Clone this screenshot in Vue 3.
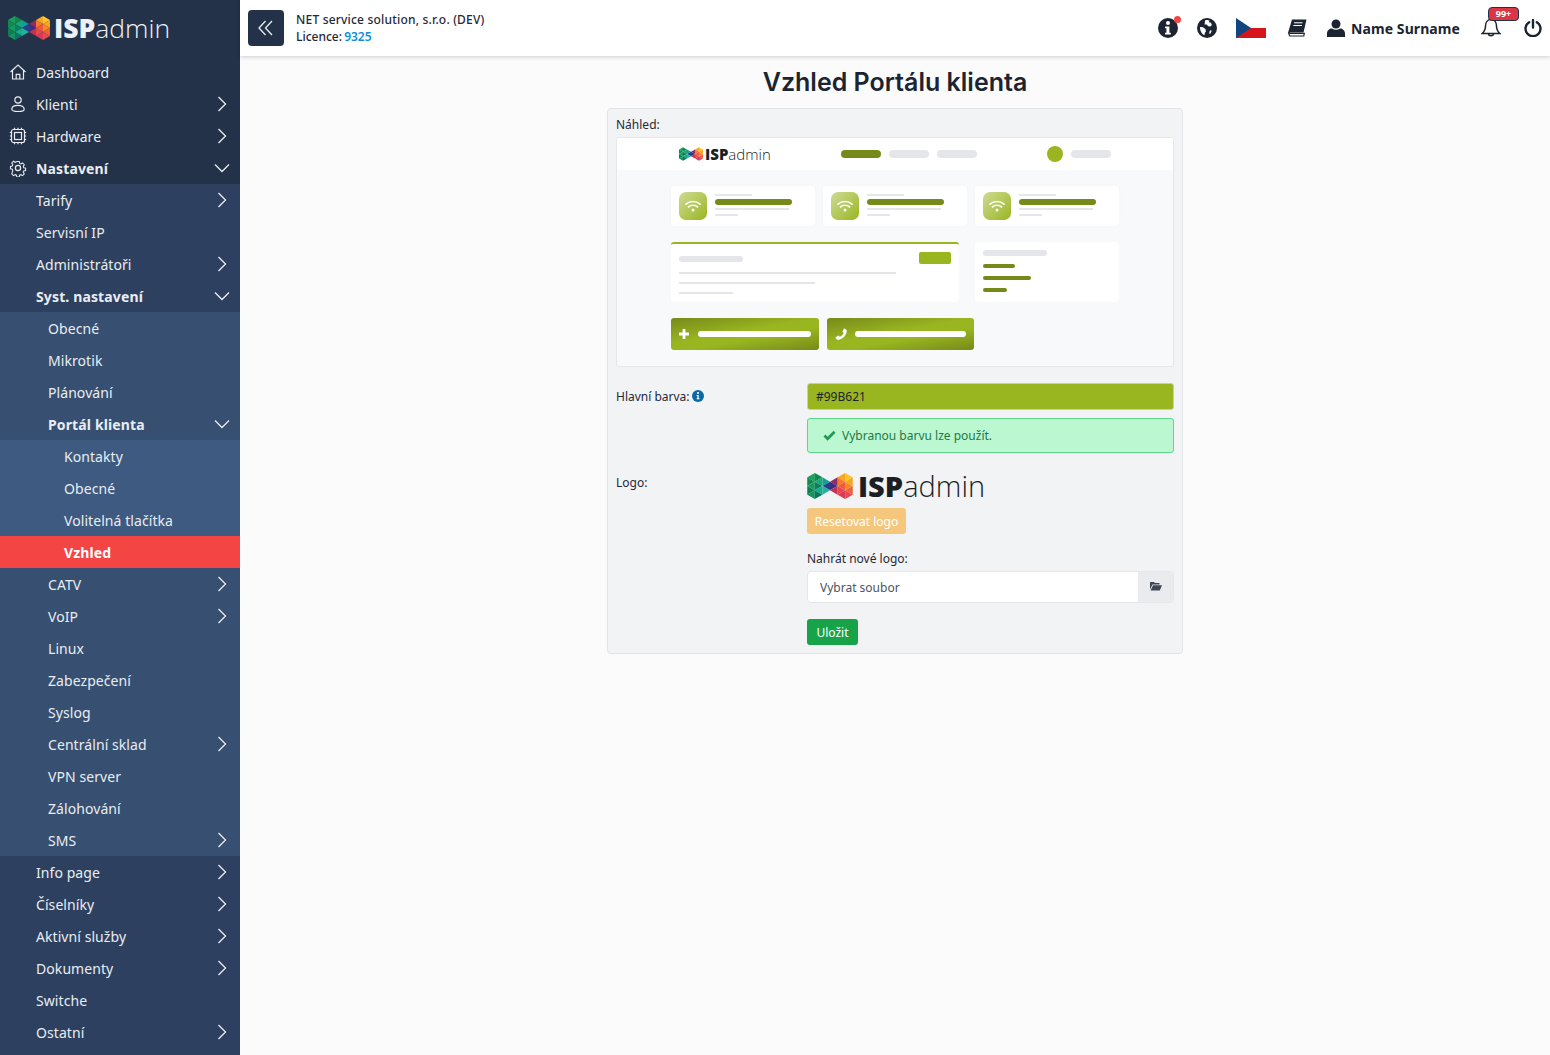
<template>
  <div class="app">
    <aside class="sidebar">
      <div class="brand">
        <svg class="mark" viewBox="0 0 84 48"><polygon v-for="(t, i) in logoTris" :key="i" :points="t.p" :fill="t.c" /></svg>
        <span class="word light"><b>ISP</b>admin</span>
      </div>
      <nav class="menu">
        <a
          v-for="item in menu"
          :key="item.t + item.lv"
          class="row"
          :class="['lv' + item.lv, { bold: item.bold, active: item.active }]"
        >
          <svg v-if="item.icon === 'home'" class="ico" viewBox="0 0 18 18"><path d="M1.5 9 9 2l7.5 7M3.5 7.5V16h11V7.5M7.2 16v-4.6h3.6V16" /></svg>
          <svg v-if="item.icon === 'user'" class="ico" viewBox="0 0 18 18"><circle cx="9" cy="5" r="3.2" /><path d="M2.8 14.2c0-2.6 2.8-3.8 6.2-3.8s6.2 1.2 6.2 3.8c0 1.6-2.8 2.3-6.2 2.3s-6.2-.7-6.2-2.3z" /></svg>
          <svg v-if="item.icon === 'cpu'" class="ico" viewBox="0 0 18 18"><rect x="2.5" y="2.5" width="13" height="13" rx="2" /><rect x="5.5" y="5.5" width="7" height="7" /><path d="M.8 5.5h1.7M.8 9h1.7M.8 12.5h1.7M15.5 5.5h1.7M15.5 9h1.7M15.5 12.5h1.7M5.5.8v1.7M9 .8v1.7M12.5.8v1.7M5.5 15.5v1.7M9 15.5v1.7M12.5 15.5v1.7" /></svg>
          <svg v-if="item.icon === 'gear'" class="ico" viewBox="0 0 18 18"><circle cx="9" cy="9" r="2.6" /><path d="M7.6 1.5h2.8l.4 2.2 1.5.7 1.9-1.2 2 2-1.2 1.9.6 1.5 2.1.5v2.8l-2.1.5-.6 1.5 1.2 1.9-2 2-1.9-1.2-1.5.6-.4 2.1H7.6l-.4-2.1-1.5-.6-1.9 1.2-2-2L3 11.9l-.6-1.5-2.1-.5V7.1l2.1-.5.6-1.5-1.2-1.9 2-2 1.9 1.2 1.5-.7z" transform="translate(1.2 1.2) scale(.87)" /></svg>
          <span class="label">{{ item.t }}</span>
          <svg v-if="item.arrow === 'r'" class="arrow" viewBox="0 0 16 16"><path d="m4.5 1 7 7-7 7" /></svg>
          <svg v-if="item.arrow === 'd'" class="arrow" viewBox="0 0 16 16"><path d="m1 4.5 7 7 7-7" /></svg>
        </a>
      </nav>
    </aside>

    <div class="page">
      <header class="topbar">
        <button class="collapse">
          <svg viewBox="0 0 18 18"><path d="M8.5 2 2 9l6.5 7M15 2 8.5 9l6.5 7" /></svg>
        </button>
        <div class="company">
          <div class="firm">NET service solution, s.r.o. (DEV)</div>
          <div>Licence: <a class="lic">9325</a></div>
        </div>
        <div class="tools">
          <span class="tool info">
            <svg viewBox="0 0 20 20"><circle cx="10" cy="10" r="10" fill="#1b2430" /><circle cx="10" cy="5" r="2" fill="#fff" /><path d="M7 8.500h4.400v6.300h1.400v1.700H7v-1.700h1.400v-4.600H7z" fill="#fff" /></svg>
            <i class="dot"></i>
          </span>
          <svg class="globe" viewBox="0 0 20 20"><circle cx="10" cy="10" r="10" fill="#1b2430" /><path d="M8 2.500c1.500-.7 3.500-.5 4.500.2l-.6 1.500 2 .6 1 2.200-1.500 1.600-2-.3-2.200-2-1.600.4zM3 9l3 .3 2.600 2 .3 2.200-1 1.200-.4 2.600C5 16.300 2.800 13 3 9zM13 12.300l1.800.5-1.500 3-1.300-.3z" fill="#fff" /></svg>
          <svg class="flag" viewBox="0 0 30 20"><rect width="30" height="10" fill="#fff" /><rect y="10" width="30" height="10" fill="#d7141a" /><path d="M0 0 15 10 0 20z" fill="#11457e" /></svg>
          <svg class="book" viewBox="0 0 20 18"><path d="M5 .5h14.500l-3 13H3.800C2.200 13.500 1.500 14.500 1.500 15.500L.8 14.500z" fill="#1b2430" /><path d="M3.500 14.300h13.800l-.5 2.700H3.500c-1.700 0-1.900-2.700 0-2.700z" fill="#fff" stroke="#1b2430" stroke-width="1.200" /><path d="M7 3.800h8.500M6.400 6.500h8.500" stroke="#fff" stroke-width="1" /></svg>
          <span class="who">
            <svg viewBox="0 0 18 18"><circle cx="9" cy="5" r="4.500" fill="#1b2430" /><path d="M0 18v-3.500C0 11.500 2.500 9.500 5 9.500c1.200.8 2.500 1.200 4 1.200s2.800-.4 4-1.200c2.500 0 5 2 5 5V18z" fill="#1b2430" /></svg>
            Name Surname
          </span>
          <span class="bell">
            <svg viewBox="0 0 20 20"><path d="M10 1.500c3.500 0 5.500 2.800 5.500 6.500 0 4 1.400 5.800 3.300 7.500H1.200C3.100 13.800 4.500 12 4.500 8c0-3.700 2-6.500 5.500-6.500zM7.500 15.800c0 2.600 5 2.600 5 0" fill="none" stroke="#1b2430" stroke-width="1.500" /></svg>
            <em class="badge">99+</em>
          </span>
          <svg class="power" viewBox="0 0 18 18"><path d="M5.200 3.200a7.500 7.500 0 1 0 7.600 0M9 1v7.500" fill="none" stroke="#1b2430" stroke-width="2.400" stroke-linecap="round" /></svg>
        </div>
      </header>

      <main class="content">
        <h1>Vzhled Portálu klienta</h1>
        <section class="panel">
          <div class="preview-title">Náhled:</div>
          <div class="preview">
            <div class="pv-head">
              <div class="pv-brand">
                <svg class="mark" viewBox="0 0 84 48"><polygon v-for="(t, i) in logoTris" :key="i" :points="t.p" :fill="t.c" /></svg>
                <span class="word"><b>ISP</b>admin</span>
              </div>
              <div class="pv-links">
                <i class="pill olive"></i><i class="pill"></i><i class="pill"></i>
              </div>
              <div class="pv-user">
                <i class="avatar"></i><i class="pill"></i>
              </div>
            </div>
            <div class="pv-body">
              <div class="pv-cards">
                <div v-for="n in 3" :key="n" class="pv-card">
                  <span class="wifi">
                    <svg viewBox="0 0 16 12"><path d="M1 4.200c4-3.600 10-3.600 14 0M3.500 6.900c2.600-2.200 6.400-2.200 9 0" fill="none" stroke="#fff" stroke-width="1.600" stroke-linecap="round" /><circle cx="8" cy="10" r="1.500" fill="#fff" /></svg>
                  </span>
                  <div class="lines">
                    <i class="l l37"></i>
                    <i class="l strong"></i>
                    <i class="l l74"></i>
                    <i class="l l23"></i>
                  </div>
                </div>
              </div>
              <div class="pv-mid">
                <div class="pv-main">
                  <div class="pv-main-top">
                    <i class="bar-title"></i>
                    <i class="bar-btn"></i>
                  </div>
                  <i class="g g1"></i>
                  <i class="g g2"></i>
                  <i class="g g3"></i>
                </div>
                <div class="pv-side">
                  <i class="bar-title"></i>
                  <i class="o o1"></i>
                  <i class="o o2"></i>
                  <i class="o o3"></i>
                </div>
              </div>
              <div class="pv-btns">
                <div class="pv-btn first">
                  <svg viewBox="0 0 12 12"><path d="M6 1v10M1 6h10" stroke="#fff" stroke-width="2.800" /></svg>
                  <i></i>
                </div>
                <div class="pv-btn second">
                  <svg viewBox="0 0 12 12"><path d="M11.800 2.200 9.200.3 7.300 3.700l1.300 1.200C7.900 6.600 6.300 8 4.800 8.700L3.500 7.400.3 9.500l1.700 2.300C7.500 11.800 11.800 7.500 11.800 2.200z" fill="#fff" /></svg>
                  <i></i>
                </div>
              </div>
            </div>
          </div>

          <div class="form">
            <label class="f-label color-label">Hlavní barva:
              <svg viewBox="0 0 12 12"><circle cx="6" cy="6" r="6" fill="#0b69a3" /><circle cx="6" cy="3" r="1.100" fill="#fff" /><path d="M4.600 5h2.100v3.200h.8v1H4.600v-1h.8V6h-.8z" fill="#fff" /></svg>
            </label>
            <div>
              <div class="color-input">#99B621</div>
              <div class="ok">
                <svg viewBox="0 0 14 12"><path d="m1.500 6 3.500 3.500 7.500-7.500" fill="none" stroke="#1f9d55" stroke-width="3" /></svg>
                Vybranou barvu lze použít.
              </div>
            </div>
            <label class="f-label logo-label">Logo:</label>
            <div class="logo-col">
              <div class="big-brand">
                <svg class="mark" viewBox="0 0 84 48"><polygon v-for="(t, i) in logoTris" :key="i" :points="t.p" :fill="t.c" /></svg>
                <span class="word"><b>ISP</b>admin</span>
              </div>
              <button class="reset">Resetovat logo</button>
              <div class="upload-label">Nahrát nové logo:</div>
              <div class="file">
                <span class="file-name">Vybrat soubor</span>
                <span class="file-btn">
                  <svg viewBox="0 0 12 10"><path d="M0 1h4l1 1h4.500v1.500H2.500L0 8.500zM3 4.300h9L9.800 9.500H.6z" fill="#3f4754" /></svg>
                </span>
              </div>
              <button class="save">Uložit</button>
            </div>
          </div>
        </section>
      </main>
    </div>
  </div>
</template>

<script setup>
// flat menu list, level only decides indent and background
const menu = [
  { t: 'Dashboard', lv: 0, icon: 'home' },
  { t: 'Klienti', lv: 0, icon: 'user', arrow: 'r' },
  { t: 'Hardware', lv: 0, icon: 'cpu', arrow: 'r' },
  { t: 'Nastavení', lv: 0, icon: 'gear', arrow: 'd', bold: true },
  { t: 'Tarify', lv: 1, arrow: 'r' },
  { t: 'Servisní IP', lv: 1 },
  { t: 'Administrátoři', lv: 1, arrow: 'r' },
  { t: 'Syst. nastavení', lv: 1, arrow: 'd', bold: true },
  { t: 'Obecné', lv: 2 },
  { t: 'Mikrotik', lv: 2 },
  { t: 'Plánování', lv: 2 },
  { t: 'Portál klienta', lv: 2, arrow: 'd', bold: true },
  { t: 'Kontakty', lv: 3 },
  { t: 'Obecné', lv: 3 },
  { t: 'Volitelná tlačítka', lv: 3 },
  { t: 'Vzhled', lv: 3, bold: true, active: true },
  { t: 'CATV', lv: 2, arrow: 'r' },
  { t: 'VoIP', lv: 2, arrow: 'r' },
  { t: 'Linux', lv: 2 },
  { t: 'Zabezpečení', lv: 2 },
  { t: 'Syslog', lv: 2 },
  { t: 'Centrální sklad', lv: 2, arrow: 'r' },
  { t: 'VPN server', lv: 2 },
  { t: 'Zálohování', lv: 2 },
  { t: 'SMS', lv: 2, arrow: 'r' },
  { t: 'Info page', lv: 1, arrow: 'r' },
  { t: 'Číselníky', lv: 1, arrow: 'r' },
  { t: 'Aktivní služby', lv: 1, arrow: 'r' },
  { t: 'Dokumenty', lv: 1, arrow: 'r' },
  { t: 'Switche', lv: 1 },
  { t: 'Ostatní', lv: 1, arrow: 'r' },
]

// triangles of the logo on a lattice, left half first, right half is mirrored
const left = [
  [[0, 8], [14, 0], [14, 16], '#1aa05a'],
  [[0, 8], [14, 16], [0, 24], '#12894f'],
  [[0, 24], [14, 16], [14, 32], '#179a5e'],
  [[0, 24], [14, 32], [0, 40], '#0f7f52'],
  [[0, 40], [14, 32], [14, 48], '#14925f'],
  [[14, 0], [28, 8], [14, 16], '#0f8a4e'],
  [[14, 16], [28, 8], [28, 24], '#1ba677'],
  [[14, 16], [28, 24], [14, 32], '#0e7d62'],
  [[14, 32], [28, 24], [28, 40], '#17ab8c'],
  [[14, 32], [28, 40], [14, 48], '#0c7560'],
  [[28, 8], [42, 16], [28, 24], '#12a094'],
  [[28, 24], [42, 16], [42, 32], '#2a3f8c'],
  [[28, 24], [42, 32], [28, 40], '#1fb3a0'],
]
const right = [
  '#ffc52e', '#f9a61f', '#f58a25', '#f0603c', '#ea4a4c',
  '#f9a620', '#f4792c', '#ef5a3c', '#e94650', '#d93a56',
  '#8e2c6a', '#3a2f80', '#c2334f',
]
const toPts = (a, b, c) => [a, b, c].map(v => v.join(',')).join(' ')
const logoTris = [
  ...left.map(([a, b, c, col]) => ({ p: toPts(a, b, c), c: col })),
  ...left.map(([a, b, c], i) => ({
    p: toPts([84 - a[0], a[1]], [84 - b[0], b[1]], [84 - c[0], c[1]]),
    c: right[i],
  })),
]
</script>

<style scoped>
.app {
  display: flex;
  width: 1550px;
  height: 1055px;
  overflow: hidden;
  font-family: "Noto Sans", "Open Sans", sans-serif;
  font-size: 12px;
  color: #1f2937;
  background: #fbfbfc;
}

/* sidebar */
.sidebar {
  width: 240px;
  flex: none;
  background: #233249;
  display: flex;
  flex-direction: column;
}
.brand {
  height: 56px;
  flex: none;
  display: flex;
  align-items: center;
  gap: 4px;
  padding-left: 8px;
}
.mark {
  display: block;
  flex: none;
}
.brand .mark {
  width: 42px;
  height: 24px;
}
.word {
  font-family: "Open Sans", sans-serif;
  font-weight: 300;
  color: #1b1f24;
}
.word b {
  font-weight: 800;
}
.word.light {
  color: #eef1f5;
  font-size: 26.500px;
  line-height: 56px;
}
.menu {
  flex: 1;
  display: flex;
  flex-direction: column;
  background: linear-gradient(#2d4060, #2d4060) 0 128px no-repeat;
}
.row {
  height: 32px;
  flex: none;
  display: flex;
  align-items: center;
  padding: 0 10px 0 36px;
  position: relative;
  color: #e9edf2;
  font-size: 14px;
  letter-spacing: 0.07px;
}
.row.bold {
  font-weight: 700;
  letter-spacing: 0.13px;
}
.lv0 { background: #233249; }
.lv1 { background: #2d4060; }
.lv2 { background: #374f70; padding-left: 48px; }
.lv3 { background: #3e5a80; padding-left: 64px; }
.row.active {
  background: #f44545;
  color: #fff;
}
.ico {
  position: absolute;
  left: 9px;
  top: 7px;
  width: 18px;
  height: 18px;
  fill: none;
  stroke: #e9edf2;
  stroke-width: 1.2;
}
.label {
  flex: 1;
}
.arrow {
  width: 16px;
  height: 16px;
  margin-top: -1px;
  fill: none;
  stroke: #e9edf2;
  stroke-width: 1.300;
}

/* top bar */
.page {
  flex: 1;
  min-width: 0;
  display: flex;
  flex-direction: column;
}
.topbar {
  height: 56px;
  flex: none;
  display: flex;
  align-items: center;
  padding: 0 8px;
  background: #fff;
  box-shadow: 0 1px 4px rgba(0, 0, 0, 0.18);
  position: relative;
}
.collapse {
  width: 36px;
  height: 36px;
  padding: 0;
  border: 0;
  border-radius: 4px;
  background: #233249;
  display: flex;
  align-items: center;
  justify-content: center;
}
.collapse svg {
  width: 18px;
  height: 18px;
  fill: none;
  stroke: #e9edf2;
  stroke-width: 1.300;
}
.company {
  margin-left: 12px;
  font-size: 12px;
  line-height: 17px;
  font-weight: 500;
  color: #1f2937;
}
.firm {
  letter-spacing: 0.2px;
}
.lic {
  margin-left: -1px;
  color: #0d8fd6;
  font-weight: 600;
}
.tools {
  margin-left: auto;
  display: flex;
  align-items: center;
}
.tool {
  position: relative;
  display: block;
  width: 20px;
  height: 20px;
}
.tool svg {
  display: block;
  width: 20px;
  height: 20px;
}
.dot {
  position: absolute;
  right: -3px;
  top: -2px;
  width: 7px;
  height: 7px;
  border-radius: 50%;
  background: #f44545;
}
.globe {
  width: 20px;
  height: 20px;
  margin-left: 19px;
}
.flag {
  width: 30px;
  height: 20px;
  margin-left: 19px;
}
.book {
  width: 20px;
  height: 18px;
  margin-left: 21px;
}
.who {
  display: flex;
  align-items: center;
  margin-left: 20px;
  font-size: 14px;
  font-weight: 700;
  letter-spacing: 0.08px;
  color: #1b2430;
  gap: 6px;
}
.who svg {
  width: 18px;
  height: 18px;
}
.bell {
  position: relative;
  display: block;
  width: 20px;
  height: 20px;
  margin-left: 21px;
}
.bell svg {
  display: block;
  width: 20px;
  height: 20px;
}
.badge {
  position: absolute;
  left: 7px;
  top: -11px;
  width: 31px;
  height: 14px;
  box-sizing: border-box;
  border: 1px solid #233249;
  border-radius: 4px;
  background: #dc3545;
  color: #fff;
  font-size: 9px;
  font-weight: 700;
  font-style: normal;
  line-height: 12px;
  text-align: center;
}
.power {
  width: 18px;
  height: 18px;
  margin-left: 23px;
}

/* content */
.content {
  flex: 1;
  min-height: 0;
  display: flex;
  flex-direction: column;
  align-items: center;
}
h1 {
  margin: 10px 0 0;
  height: 42px;
  font-family: Inter, sans-serif;
  font-size: 25px;
  line-height: 32px;
  font-weight: 600;
  color: #1b2430;
}
.panel {
  width: 576px;
  height: 546px;
  box-sizing: border-box;
  padding: 7px 8px 0;
  background: #f2f3f5;
  border: 1px solid #e3e4e8;
  border-radius: 4px;
  font-size: 12px;
}
.preview-title {
  height: 21px;
  line-height: 17px;
}
.preview {
  height: 230px;
  box-sizing: border-box;
  border: 1px solid #e5e7eb;
  border-radius: 3px;
  background: #f8f9fb;
  overflow: hidden;
}
.pv-head {
  height: 32px;
  background: #fff;
  display: flex;
  align-items: center;
  position: relative;
}
.pv-brand {
  width: 162px;
  margin-left: 62px;
  display: flex;
  align-items: center;
  gap: 2px;
}
.pv-brand .mark {
  width: 24px;
  height: 14px;
}
.pv-brand .word {
  font-size: 15px;
  line-height: 20px;
}
.pv-links {
  display: flex;
  gap: 8px;
}
.pill {
  display: block;
  width: 40px;
  height: 8px;
  border-radius: 4px;
  background: #e5e6ea;
}
.pill.olive {
  background: #768a19;
}
.pv-user {
  margin-left: 70px;
  display: flex;
  align-items: center;
  gap: 8px;
}
.avatar {
  display: block;
  width: 16px;
  height: 16px;
  border-radius: 50%;
  background: #99b621;
}
.pv-body {
  padding: 16px 0 0 54px;
}
.pv-cards {
  display: flex;
  gap: 8px;
}
.pv-card {
  width: 144px;
  height: 40px;
  box-sizing: border-box;
  padding: 6px 8px;
  display: flex;
  gap: 8px;
  background: #fff;
  border-radius: 3px;
  box-shadow: 0 0 3px rgba(0, 0, 0, 0.03);
}
.wifi {
  width: 28px;
  height: 28px;
  flex: none;
  border-radius: 7px;
  background: linear-gradient(135deg, #cfdb95, #99b621);
  display: flex;
  align-items: center;
  justify-content: center;
}
.wifi svg {
  width: 16px;
  height: 12px;
}
.lines {
  flex: 1;
  padding-top: 2px;
}
.l {
  display: block;
  height: 2px;
  background: #e5e6ea;
  margin-bottom: 3px;
}
.l37 { width: 37px; }
.l74 { width: 74px; }
.l23 { width: 23px; margin-top: 4px; }
.l.strong {
  width: 77px;
  height: 6px;
  border-radius: 3px;
  background: #768a19;
}
.pv-mid {
  display: flex;
  gap: 16px;
  margin-top: 16px;
}
.pv-main {
  width: 288px;
  height: 60px;
  box-sizing: border-box;
  padding: 0 8px;
  background: #fff;
  border-top: 2px solid #99b621;
  border-radius: 3px;
}
.pv-main-top {
  height: 26px;
  padding-top: 8px;
  box-sizing: border-box;
  display: flex;
  justify-content: space-between;
  align-items: flex-start;
}
.bar-title {
  display: block;
  width: 64px;
  height: 6px;
  margin-top: 4px;
  border-radius: 3px;
  background: #e5e6ea;
}
.bar-btn {
  display: block;
  width: 32px;
  height: 12px;
  border-radius: 2px;
  background: #99b621;
}
.g {
  display: block;
  height: 2px;
  background: #e5e6ea;
}
.g1 { width: 217px; margin-top: 2px; }
.g2 { width: 136px; margin-top: 8px; }
.g3 { width: 54px; margin-top: 8px; }
.pv-side {
  width: 144px;
  height: 60px;
  box-sizing: border-box;
  padding: 8px;
  background: #fff;
  border-radius: 3px;
}
.pv-side .bar-title {
  margin-top: 0;
}
.o {
  display: block;
  height: 4px;
  border-radius: 2px;
  background: #768a19;
  margin-top: 8px;
}
.o1 { width: 32px; }
.o2 { width: 48px; }
.o3 { width: 24px; }
.pv-btns {
  display: flex;
  gap: 8px;
  margin-top: 16px;
}
.pv-btn {
  width: 148px;
  height: 32px;
  box-sizing: border-box;
  padding: 0 8px;
  border-radius: 3px;
  display: flex;
  align-items: center;
  gap: 8px;
  background: linear-gradient(170deg, #768a19 0%, #99b621 45%, #99b621 60%, #768a19 100%);
}
.pv-btn.first {
  padding-left: 7px;
}
.pv-btn.second {
  width: 147px;
}
.pv-btn svg {
  width: 12px;
  height: 12px;
  flex: none;
}
.pv-btn i {
  flex: 1;
  height: 6px;
  border-radius: 3px;
  background: #fff;
}

/* form */
.form {
  display: grid;
  grid-template-columns: 191px 1fr;
  margin-top: 16px;
}
.f-label {
  line-height: 27px;
}
.color-label {
  display: flex;
  align-items: flex-start;
  gap: 2px;
}
.color-label svg {
  width: 12px;
  height: 12px;
  margin-top: 7px;
}
.color-input {
  height: 27px;
  box-sizing: border-box;
  border: 1px solid #c8cac8;
  border-radius: 3px;
  background: #99b621;
  padding: 0 8px;
  line-height: 25px;
  color: #1b2430;
}
.ok {
  height: 35px;
  box-sizing: border-box;
  margin-top: 8px;
  border: 1px solid #5fd68a;
  border-radius: 3px;
  background: #bbf7d0;
  color: #1d7a45;
  line-height: 33px;
  padding-left: 15px;
  display: flex;
  align-items: center;
  gap: 6px;
}
.ok svg {
  width: 13px;
  height: 11px;
}
.logo-label {
  margin-top: 16px;
}
.logo-col {
  display: flex;
  flex-direction: column;
  align-items: flex-start;
  padding-top: 19px;
}
.big-brand {
  height: 28px;
  display: flex;
  align-items: center;
  gap: 5px;
}
.big-brand .mark {
  width: 46px;
  height: 26px;
}
.big-brand .word {
  font-size: 29px;
  line-height: 28px;
}
.reset {
  margin-top: 8px;
  height: 26px;
  width: 99px;
  padding: 0;
  border: 0;
  border-radius: 3px;
  background: #f4c77d;
  color: #fff;
  font: inherit;
}
.upload-label {
  margin-top: 16px;
  height: 21px;
  line-height: 17px;
}
.file {
  width: 100%;
  height: 32px;
  box-sizing: border-box;
  display: flex;
  border: 1px solid #e5e7eb;
  border-radius: 4px;
  background: #fff;
  overflow: hidden;
}
.file-name {
  flex: 1;
  padding-left: 12px;
  line-height: 31px;
  color: #4b5563;
}
.file-btn {
  width: 35px;
  background: #e9ebee;
  display: flex;
  align-items: center;
  justify-content: center;
}
.file-btn svg {
  width: 12px;
  height: 10px;
  margin-top: -3px;
}
.save {
  margin-top: 16px;
  width: 51px;
  height: 26px;
  padding: 0;
  border: 0;
  border-radius: 3px;
  background: #16a34a;
  color: #fff;
  font: inherit;
}
</style>
